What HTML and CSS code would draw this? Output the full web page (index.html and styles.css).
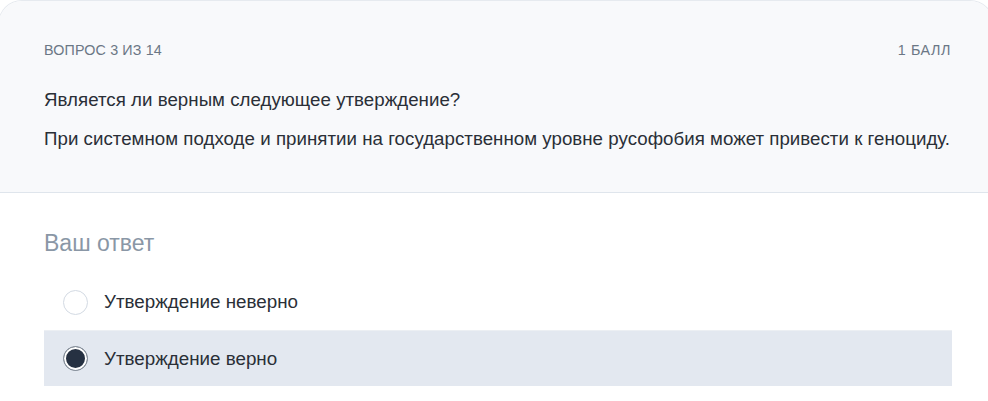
FILE: index.html
```html
<!DOCTYPE html>
<html lang="ru">
<head>
<meta charset="utf-8">
<link rel="stylesheet" href="styles.css">
</head>
<body>
<div class="card">
  <div class="question">
    <div class="meta">
      <span>ВОПРОС 3 ИЗ 14</span>
      <span class="points">1 БАЛЛ</span>
    </div>
    <p class="q-text">Является ли верным следующее утверждение?</p>
    <p class="q-text second">При системном подходе и принятии на государственном уровне русофобия может привести к геноциду.</p>
  </div>
  <div class="answer">
    <div class="answer-title">Ваш ответ</div>
    <div class="options">
      <div class="option">
        <span class="radio"></span>
        <span class="label">Утверждение неверно</span>
      </div>
      <div class="option selected">
        <span class="radio checked"></span>
        <span class="label">Утверждение верно</span>
      </div>
    </div>
  </div>
</div>
</body>
</html>
```

FILE: styles.css
```css
html, body {
  margin: 0;
  padding: 0;
  background: #ffffff;
}
body {
  font-family: "Liberation Sans", Arial, sans-serif;
  color: #2a2f37;
  overflow: hidden;
}
.card {
  margin: 0 -6px 0 -2px;
  border: 1px solid #e6eaef;
  border-bottom: none;
  border-radius: 24px 24px 0 0;
  overflow: hidden;
  background: #ffffff;
}
.question {
  background: #f8f9fb;
  border-bottom: 1px solid #dfe5ec;
  padding: 39px 42px 40px 45px;
}
.meta {
  display: flex;
  justify-content: space-between;
  font-size: 14.3px;
  letter-spacing: 0.15px;
  line-height: 20px;
  color: #6b7785;
}
.points {
  letter-spacing: 0.6px;
}
.q-text {
  margin: 26px 0 0;
  font-size: 18.7px;
  letter-spacing: 0.03px;
  line-height: 27px;
  color: #2a2f37;
}
.q-text.second {
  margin-top: 12px;
}
.answer {
  padding: 34px 41px 0 45px;
}
.answer-title {
  font-size: 23px;
  line-height: 32px;
  color: #8a97a6;
}
.options {
  margin-top: 15px;
}
.option {
  display: flex;
  align-items: center;
  gap: 16px;
  height: 56px;
  padding-left: 19px;
  box-sizing: border-box;
  font-size: 18.8px;
  color: #2a2f37;
}
.option.selected {
  background: #e3e8f0;
  border-top: 1px solid #eceff3;
}
.radio {
  width: 25px;
  height: 25px;
  box-sizing: border-box;
  border-radius: 50%;
  border: 1.5px solid #d3dae3;
  background: #ffffff;
  flex: none;
}
.radio.checked {
  border: 1.5px solid #8e97a2;
  background: #263142;
  box-shadow: inset 0 0 0 2px #ffffff;
}
```
